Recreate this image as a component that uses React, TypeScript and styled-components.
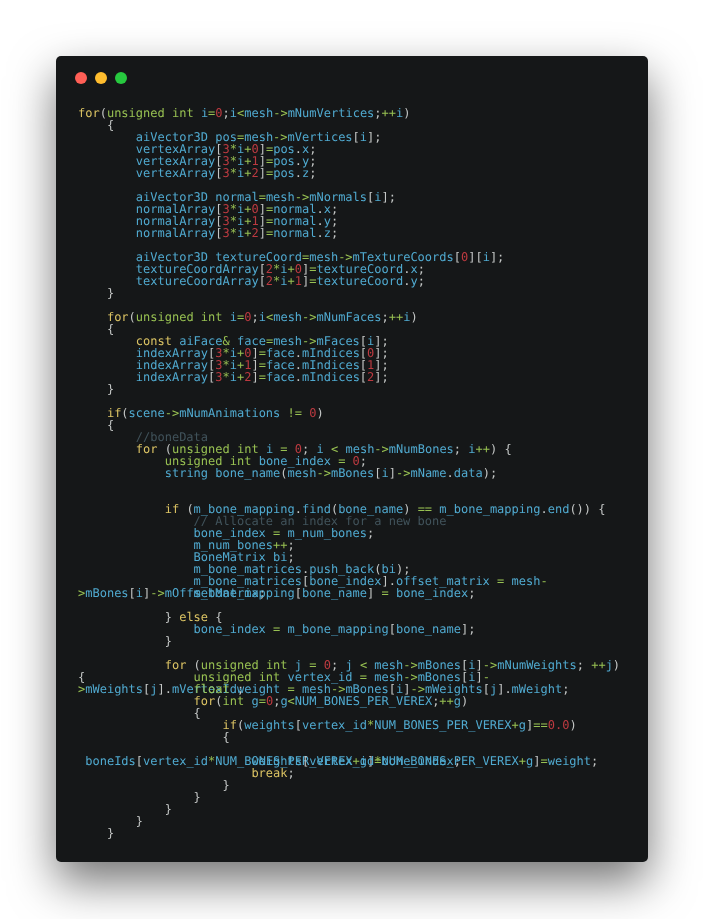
import styled, {createGlobalStyle} from 'styled-components'

type Kind = 'plain' | 'keyword' | 'type' | 'number' | 'operator' | 'name' | 'comment'

const SOURCE = `for(unsigned int i=0;i<mesh->mNumVertices;++i)
    {
        aiVector3D pos=mesh->mVertices[i];
        vertexArray[3*i+0]=pos.x;
        vertexArray[3*i+1]=pos.y;
        vertexArray[3*i+2]=pos.z;

        aiVector3D normal=mesh->mNormals[i];
        normalArray[3*i+0]=normal.x;
        normalArray[3*i+1]=normal.y;
        normalArray[3*i+2]=normal.z;

        aiVector3D textureCoord=mesh->mTextureCoords[0][i];
        textureCoordArray[2*i+0]=textureCoord.x;
        textureCoordArray[2*i+1]=textureCoord.y;
    }

    for(unsigned int i=0;i<mesh->mNumFaces;++i)
    {
        const aiFace& face=mesh->mFaces[i];
        indexArray[3*i+0]=face.mIndices[0];
        indexArray[3*i+1]=face.mIndices[1];
        indexArray[3*i+2]=face.mIndices[2];
    }

    if(scene->mNumAnimations != 0)
    {
        //boneData
        for (unsigned int i = 0; i < mesh->mNumBones; i++) {
            unsigned int bone_index = 0;
            string bone_name(mesh->mBones[i]->mName.data);


            if (m_bone_mapping.find(bone_name) == m_bone_mapping.end()) {
                // Allocate an index for a new bone
                bone_index = m_num_bones;
                m_num_bones++;
                BoneMatrix bi;
                m_bone_matrices.push_back(bi);
                m_bone_matrices[bone_index].offset_matrix = mesh->mBones[i]->mOffsetMatrix;
                m_bone_mapping[bone_name] = bone_index;

            } else {
                bone_index = m_bone_mapping[bone_name];
            }

            for (unsigned int j = 0; j < mesh->mBones[i]->mNumWeights; ++j) {
                unsigned int vertex_id = mesh->mBones[i]->mWeights[j].mVertexId;
                float weight = mesh->mBones[i]->mWeights[j].mWeight;
                for(int g=0;g<NUM_BONES_PER_VEREX;++g)
                {
                    if(weights[vertex_id*NUM_BONES_PER_VEREX+g]==0.0)
                    {
                       \u00a0boneIds[vertex_id*NUM_BONES_PER_VEREX+g]=bone_index;
                        weights[vertex_id*NUM_BONES_PER_VEREX+g]=weight;
                        break;
                    }
                }
            }
        }
    }`

const TOKEN =
  /(\/\/.*)|(\b(?:for|if|else|const|break)\b)|(\b(?:unsigned|int|float)\b)|(\b\d+(?:\.\d+)?\b)|(->|\+\+|==|!=|[=*+<>&!-])|([A-Za-z_]\w*)|([^\/\w=*+<>&!-]+)/g

const KINDS: Kind[] = ['comment', 'keyword', 'type', 'number', 'operator', 'name', 'plain']

function tokenize(line: string) {
  return Array.from(line.matchAll(TOKEN)).map(match => ({
    text: match[0],
    kind: KINDS[match.slice(1).findIndex(group => group !== undefined)]
  }))
}

const COLORS: Record<Kind, string> = {
  plain: '#c4c7c6',
  keyword: '#dcc464',
  type: '#98c152',
  number: '#bc3a40',
  operator: '#98c152',
  name: '#50aad0',
  comment: '#41535b'
}

export default function App() {
  return (
    <Page>
      <GlobalStyle />
      <Window>
        <Controls>
          <Dot $color="#ff5f56" />
          <Dot $color="#ffbd2e" />
          <Dot $color="#27c93f" />
        </Controls>
        <Code>
          {SOURCE.split('\n').map((line, index) => (
            <Row key={index}>
              {tokenize(line).map((token, tokenIndex) => (
                <Token key={tokenIndex} $kind={token.kind}>
                  {token.text}
                </Token>
              ))}
            </Row>
          ))}
        </Code>
      </Window>
    </Page>
  )
}

const GlobalStyle = createGlobalStyle`
  html,
  body {
    margin: 0;
    background: #fff;
  }
`

const Page = styled.div`
  width: 704px;
  height: 919px;
  box-sizing: border-box;
  padding: 56px;
  overflow: hidden;
`

const Window = styled.div`
  height: 806px;
  box-sizing: border-box;
  background: #151718;
  border-radius: 5px;
  box-shadow: 0 20px 46px rgba(0, 0, 0, 0.55);
  padding: 16px 22px 0;
`

const Controls = styled.div`
  display: flex;
  gap: 8px;
  margin-left: -3px;
`

const Dot = styled.span<{$color: string}>`
  width: 12px;
  height: 12px;
  border-radius: 50%;
  background: ${({$color}) => $color};
`

const Code = styled.div`
  margin-top: 23px;
  font-family: 'DejaVu Sans Mono', monospace;
  font-size: 12px;
  line-height: 12px;
  text-rendering: geometricPrecision;
  color: #c4c7c6;
  filter: blur(0.4px);
  transform: translateY(0.4px);
`

const Row = styled.div`
  height: 12px;
  white-space: pre-wrap;
`

const Token = styled.span<{$kind: Kind}>`
  color: ${({$kind}) => COLORS[$kind]};
`
